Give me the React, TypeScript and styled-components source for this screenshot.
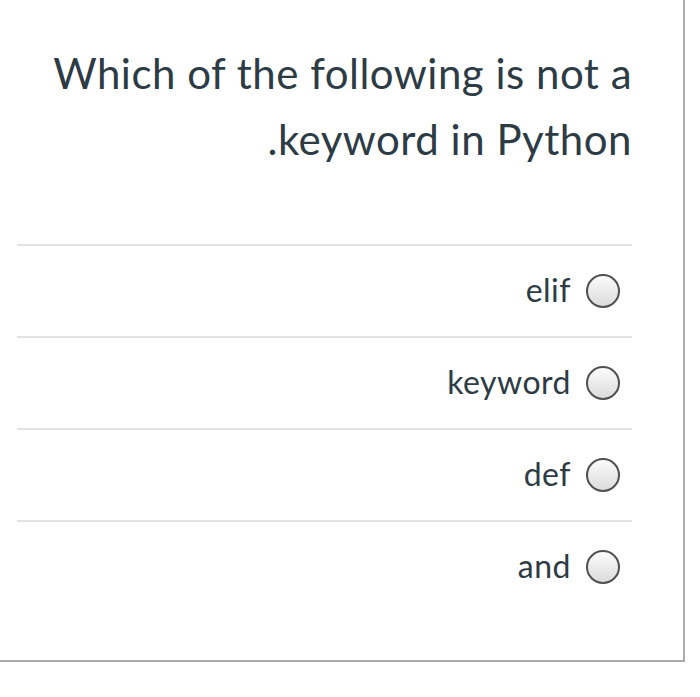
import React from "react";
import styled, { createGlobalStyle } from "styled-components";

const GlobalStyle = createGlobalStyle`
  html, body {
    margin: 0;
    padding: 0;
    background: #fff;
  }
  body {
    font-family: Lato, "Liberation Sans", sans-serif;
    color: #2d3b45;
  }
`;

const QuestionCard = styled.div`
  box-sizing: border-box;
  width: 685px;
  height: 662px;
  padding: 40px 51px 0 17px;
  border-right: 2px solid #aaaaaa;
  border-bottom: 2px solid #aaaaaa;
  background: #fff;
`;

const QuestionText = styled.h2`
  margin: 0 0 72px;
  direction: rtl;
  text-align: right;
  font-weight: 400;
  font-size: 42px;
  letter-spacing: 0.5px;
  line-height: 66px;
  color: #2d3b45;
  padding-left: 20px;
`;

const AnswerList = styled.div`
  display: flex;
  flex-direction: column;
`;

const AnswerRow = styled.label`
  box-sizing: border-box;
  height: 92px;
  display: flex;
  align-items: center;
  justify-content: flex-end;
  gap: 15px;
  padding-right: 12px;
  border-top: 2px solid #e2e2e2;
  cursor: pointer;
`;

const AnswerText = styled.span`
  font-size: 32px;
  letter-spacing: 0.5px;
  color: #2d3b45;
  margin-bottom: 3px;
`;

const RadioCircle = styled.span`
  box-sizing: border-box;
  flex-shrink: 0;
  width: 34px;
  height: 34px;
  border-radius: 50%;
  border: 2.5px solid #505050;
  background: linear-gradient(180deg, #fbfbfb 0%, #dcdcdc 100%);
`;

const answers = ["elif", "keyword", "def", "and"];

export default function App() {
  return (
    <>
      <GlobalStyle />
      <QuestionCard>
        <QuestionText>Which of the following is not a keyword in Python.</QuestionText>
        <AnswerList>
          {answers.map((a) => (
            <AnswerRow key={a}>
              <AnswerText>{a}</AnswerText>
              <RadioCircle />
            </AnswerRow>
          ))}
        </AnswerList>
      </QuestionCard>
    </>
  );
}
